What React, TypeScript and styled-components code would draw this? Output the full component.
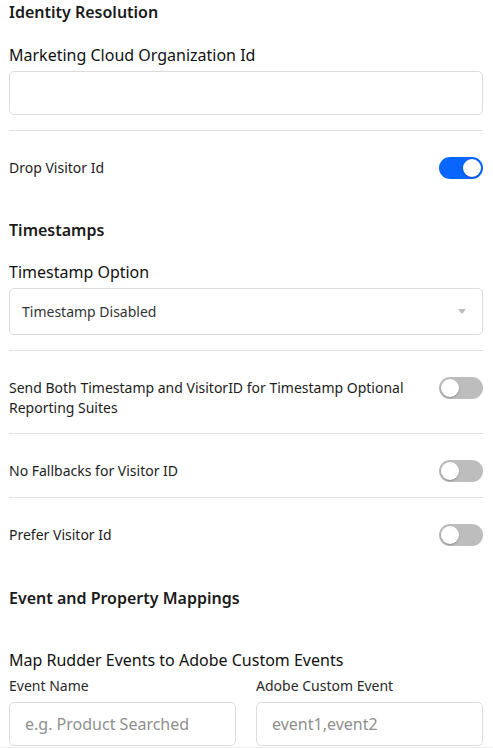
import React, { useState } from 'react';
import styled, { createGlobalStyle } from 'styled-components';

const GlobalStyle = createGlobalStyle`
  * {
    box-sizing: border-box;
  }
  body {
    margin: 0;
    background: #ffffff;
    font-family: 'Noto Sans', 'Open Sans', sans-serif;
    color: #1d1d1d;
  }
`;

interface ToggleSetting {
  label: string;
  on: boolean;
}

const timestampToggles: ToggleSetting[] = [
  { label: 'Send Both Timestamp and VisitorID for Timestamp Optional Reporting Suites', on: false },
  { label: 'No Fallbacks for Visitor ID', on: false },
  { label: 'Prefer Visitor Id', on: false },
];

const Switch: React.FC<{ on: boolean; onClick: () => void }> = ({ on, onClick }) => (
  <SwitchTrack type="button" on={on} onClick={onClick} aria-pressed={on}>
    <SwitchKnob on={on} />
  </SwitchTrack>
);

const App: React.FC = () => {
  const [dropVisitor, setDropVisitor] = useState(true);
  const [toggles, setToggles] = useState(timestampToggles);

  const flip = (index: number) => {
    setToggles(prev => prev.map((t, i) => (i === index ? { ...t, on: !t.on } : t)));
  };

  return (
    <Page>
      <GlobalStyle />
      <Form>
        <SectionTitle>Identity Resolution</SectionTitle>
        <FieldLabel gap={19}>Marketing Cloud Organization Id</FieldLabel>
        <TextInput />
        <Divider />
        <ToggleRow>
          <ToggleLabel>Drop Visitor Id</ToggleLabel>
          <Switch on={dropVisitor} onClick={() => setDropVisitor(v => !v)} />
        </ToggleRow>

        <SectionTitle gap={39}>Timestamps</SectionTitle>
        <FieldLabel gap={18}>Timestamp Option</FieldLabel>
        <SelectBox>
          <span>Timestamp Disabled</span>
          <Caret />
        </SelectBox>
        {toggles.map((t, i) => (
          <React.Fragment key={t.label}>
            <Divider />
            <ToggleRow>
              <ToggleLabel>{t.label}</ToggleLabel>
              <Switch on={t.on} onClick={() => flip(i)} />
            </ToggleRow>
          </React.Fragment>
        ))}

        <SectionTitle gap={40}>Event and Property Mappings</SectionTitle>
        <FieldLabel gap={38}>Map Rudder Events to Adobe Custom Events</FieldLabel>
        <MappingGrid>
          <MappingColumn>
            <SmallLabel>Event Name</SmallLabel>
            <TextInput placeholder="e.g. Product Searched" />
          </MappingColumn>
          <MappingColumn>
            <SmallLabel>Adobe Custom Event</SmallLabel>
            <TextInput placeholder="event1,event2" />
          </MappingColumn>
        </MappingGrid>
      </Form>
      <Footer />
    </Page>
  );
};

const Page = styled.div`
  display: flex;
  flex-direction: column;
  min-height: 100vh;
`;

const Form = styled.div`
  display: flex;
  flex-direction: column;
  padding: 0 10px 0 9px;
`;

const SectionTitle = styled.h3<{ gap?: number }>`
  margin: ${p => p.gap ?? 0}px 0 0;
  font-size: 16px;
  line-height: 24px;
  font-weight: 600;
  color: #1a1a1a;
`;

const FieldLabel = styled.label<{ gap?: number }>`
  display: block;
  margin-top: ${p => p.gap ?? 0}px;
  margin-bottom: 4px;
  font-size: 16px;
  line-height: 24px;
  font-weight: 400;
  color: #111;
`;

const SmallLabel = styled.label`
  display: block;
  font-size: 14px;
  line-height: 20px;
  color: #2a2a2a;
`;

const TextInput = styled.input`
  width: 100%;
  height: 44px;
  padding: 0 15px;
  border: 1px solid #dcdcdc;
  border-radius: 5px;
  background: #fff;
  font-family: inherit;
  font-size: 16px;
  color: #222;
  outline: none;

  &::placeholder {
    color: #8f8f8f;
  }
`;

const SelectBox = styled.div`
  display: flex;
  align-items: center;
  justify-content: space-between;
  height: 47px;
  padding: 0 16px 0 12px;
  border: 1px solid #dcdcdc;
  border-radius: 5px;
  font-size: 14px;
  color: #333;
`;

const Caret = styled.span`
  width: 0;
  height: 0;
  margin-top: -1px;
  border-left: 4px solid transparent;
  border-right: 4px solid transparent;
  border-top: 5px solid #bdbdbd;
`;

const Divider = styled.hr`
  margin: 15px 0 0;
  border: none;
  height: 1px;
  background: #e2e2e2;
`;

const ToggleRow = styled.div`
  display: flex;
  align-items: flex-start;
  justify-content: space-between;
  gap: 30px;
  padding-top: 26px;
`;

const ToggleLabel = styled.span`
  margin-top: 1px;
  font-size: 14px;
  line-height: 20px;
  color: #1d1d1d;
`;

const SwitchTrack = styled.button<{ on: boolean }>`
  position: relative;
  flex: 0 0 44px;
  width: 44px;
  height: 22px;
  padding: 0;
  border: none;
  border-radius: 11px;
  background: ${p => (p.on ? '#0866ff' : '#bdbdbd')};
  cursor: pointer;
`;

const SwitchKnob = styled.span<{ on: boolean }>`
  position: absolute;
  top: 2px;
  left: ${p => (p.on ? '24px' : '2px')};
  width: 18px;
  height: 18px;
  border-radius: 50%;
  background: #fff;
  box-shadow: 0 1px 2px rgba(0, 0, 0, 0.25);
`;

const MappingGrid = styled.div`
  display: grid;
  grid-template-columns: 1fr 1fr;
  gap: 20px;
`;

const MappingColumn = styled.div`
  display: flex;
  flex-direction: column;
  gap: 6px;
`;

const Footer = styled.div`
  margin-top: 1px;
  height: 60px;
  background: #f6f6f6;
  border-top: 1px solid #ededed;
`;

export default App;
